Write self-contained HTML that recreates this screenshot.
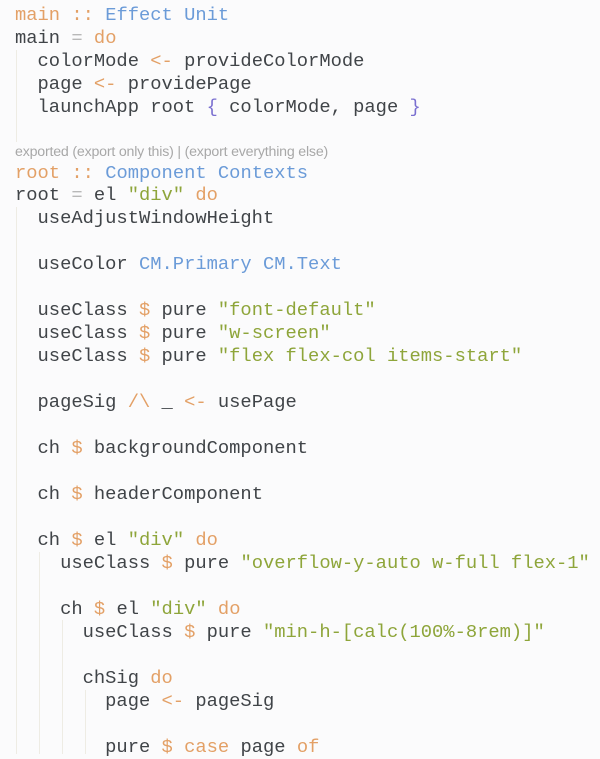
<!DOCTYPE html>
<html><head><meta charset="utf-8"><style>
body{margin:0;width:600px;height:754px;background:#fbfbfc;overflow:hidden;position:relative;font-family:"Liberation Mono","DejaVu Sans Mono",monospace;font-size:18.8px;color:#404448}
.l{position:absolute;left:15px;white-space:pre;line-height:23px;height:23px}
.k{color:#e3a066}.t{color:#6b9bd8}.s{color:#8ea53a}.o{color:#e3a066}.b{color:#7a6fd0}.e{color:#b8b8b8}
.g{position:absolute;width:1px;background:#eeece4}
.c{position:absolute;left:15px;top:144px;font-family:"Liberation Sans",sans-serif;font-size:14.2px;color:#a8a8a8;letter-spacing:-0.2px}
</style></head><body>
<div class="g" style="left:16px;top:50px;height:92px"></div>
<div class="g" style="left:16px;top:207px;height:547px"></div>
<div class="g" style="left:39px;top:552px;height:202px"></div>
<div class="g" style="left:62px;top:620px;height:134px"></div>
<div class="g" style="left:85px;top:690px;height:64px"></div>
<div class="l" style="top:4px"><span class="k">main</span> <span class="o">::</span> <span class="t">Effect Unit</span></div>
<div class="l" style="top:27px">main <span class="e">=</span> <span class="k">do</span></div>
<div class="l" style="top:50px">  colorMode <span class="o">&lt;-</span> provideColorMode</div>
<div class="l" style="top:73px">  page <span class="o">&lt;-</span> providePage</div>
<div class="l" style="top:96px">  launchApp root <span class="b">{</span> colorMode, page <span class="b">}</span></div>
<div class="c">exported (export only this) | (export everything else)</div>
<div class="l" style="top:162px"><span class="k">root</span> <span class="o">::</span> <span class="t">Component Contexts</span></div>
<div class="l" style="top:184px">root <span class="e">=</span> el <span class="s">"div"</span> <span class="k">do</span></div>
<div class="l" style="top:207px">  useAdjustWindowHeight</div>
<div class="l" style="top:253px">  useColor <span class="t">CM.Primary CM.Text</span></div>
<div class="l" style="top:299px">  useClass <span class="o">$</span> pure <span class="s">"font-default"</span></div>
<div class="l" style="top:322px">  useClass <span class="o">$</span> pure <span class="s">"w-screen"</span></div>
<div class="l" style="top:345px">  useClass <span class="o">$</span> pure <span class="s">"flex flex-col items-start"</span></div>
<div class="l" style="top:391px">  pageSig <span class="o">/\</span> _ <span class="o">&lt;-</span> usePage</div>
<div class="l" style="top:437px">  ch <span class="o">$</span> backgroundComponent</div>
<div class="l" style="top:483px">  ch <span class="o">$</span> headerComponent</div>
<div class="l" style="top:529px">  ch <span class="o">$</span> el <span class="s">"div"</span> <span class="k">do</span></div>
<div class="l" style="top:552px">    useClass <span class="o">$</span> pure <span class="s">"overflow-y-auto w-full flex-1"</span></div>
<div class="l" style="top:598px">    ch <span class="o">$</span> el <span class="s">"div"</span> <span class="k">do</span></div>
<div class="l" style="top:621px">      useClass <span class="o">$</span> pure <span class="s">"min-h-[calc(100%-8rem)]"</span></div>
<div class="l" style="top:667px">      chSig <span class="k">do</span></div>
<div class="l" style="top:690px">        page <span class="o">&lt;-</span> pageSig</div>
<div class="l" style="top:736px">        pure <span class="o">$</span> <span class="k">case</span> page <span class="k">of</span></div>
</body></html>
